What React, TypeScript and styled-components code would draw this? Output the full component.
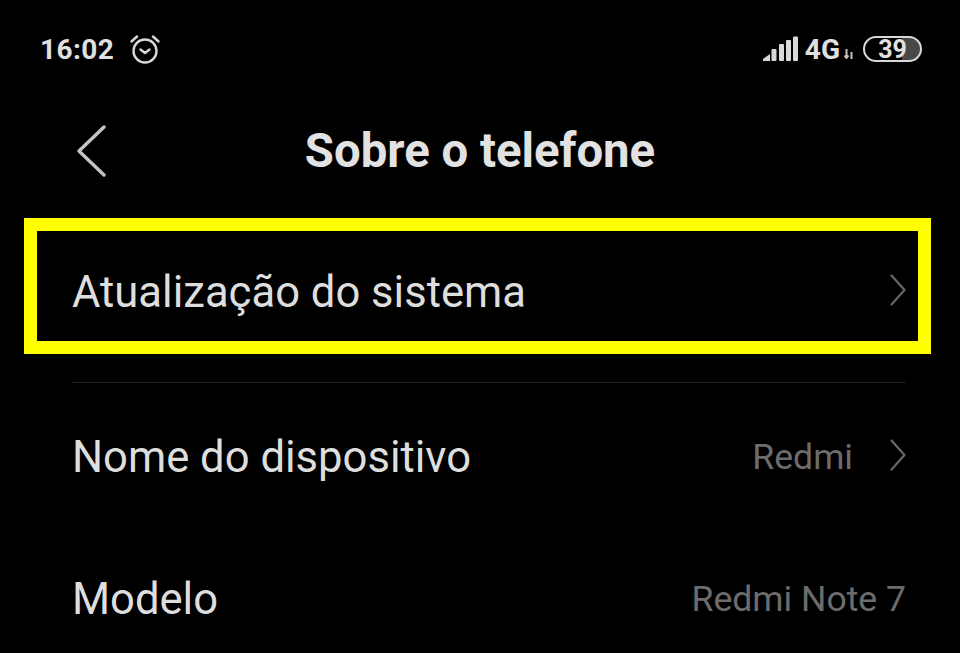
import React from 'react';
import styled, { createGlobalStyle } from 'styled-components';

const Global = createGlobalStyle`
  html, body {
    margin: 0;
    background: #000;
    overflow: hidden;
  }
`;

const Screen = styled.div`
  width: 960px;
  height: 653px;
  overflow: hidden;
  background: #000;
  font-family: Roboto, "Liberation Sans", sans-serif;
  color: #e0e0e0;
`;

const StatusBar = styled.div`
  height: 40px;
  padding: 29px 38px 0 40px;
  display: flex;
  align-items: center;
  justify-content: space-between;
`;

const StatusGroup = styled.div`
  display: flex;
  align-items: center;
`;

const Clock = styled.span`
  font-size: 28px;
  font-weight: 700;
  letter-spacing: 0.4px;
  margin-right: 16px;
`;

const NetworkLabel = styled.span`
  font-size: 28px;
  font-weight: 700;
  margin: 0 4px 0 7px;
`;

const Battery = styled.div`
  width: 59px;
  height: 26px;
  margin-left: 10px;
  box-sizing: border-box;
  border: 2.5px solid #d8d8d8;
  border-radius: 13px;
  overflow: hidden;
  display: flex;
  align-items: center;
  justify-content: center;
  background: linear-gradient(90deg, #000 68%, #484848 68%);
  font-size: 25px;
  font-weight: 700;
`;

const Header = styled.header`
  height: 164px;
  padding: 0 72px;
  position: relative;
  display: flex;
  align-items: center;
  justify-content: center;
`;

const BackIcon = styled.svg`
  position: absolute;
  left: 76px;
  top: 56px;
`;

const Title = styled.h1`
  margin: 0;
  font-size: 47.3px;
  font-weight: 700;
  color: #e2e2e2;
`;

const List = styled.div`
  padding: 0 54px 0 72px;
`;

const Row = styled.div<{ $height: number; $divider?: boolean }>`
  height: ${(p) => p.$height}px;
  box-sizing: border-box;
  display: flex;
  align-items: center;
  justify-content: space-between;
  padding-bottom: ${(p) => (p.$divider ? 30 : 0)}px;
  border-bottom: ${(p) => (p.$divider ? '1px solid #232323' : 'none')};
`;

const Label = styled.span`
  font-size: 43.6px;
  color: #dedede;
`;

const Side = styled.div`
  display: flex;
  align-items: center;
  gap: 37px;
`;

const Value = styled.span`
  font-size: 35.6px;
  color: #6c6c6c;
`;

const ChevronIcon = styled.svg`
  margin-bottom: 5px;
`;

const ArrowsIcon = styled.svg`
  margin-top: 10px;
`;

const Highlight = styled.div`
  position: absolute;
  left: 24px;
  top: 218px;
  width: 907px;
  height: 136px;
  box-sizing: border-box;
  border: 13px solid #ffff00;
`;

const Chevron = () => (
  <ChevronIcon width="16" height="32" viewBox="0 0 16 32" fill="none">
    <path d="M1.5 1.5 L14.5 16 L1.5 30.5" stroke="#666" strokeWidth="2.2" strokeLinecap="round" strokeLinejoin="round" />
  </ChevronIcon>
);

const AlarmIcon = () => (
  <svg width="30" height="30" viewBox="0 0 30 30" fill="none" stroke="#d8d8d8" strokeWidth="2.4" strokeLinecap="round" strokeLinejoin="round">
    <circle cx="15" cy="17" r="11.5" />
    <path d="M10.5 15.5 L15 19 L19.5 15.5" />
    <path d="M1.5 7.5 L7 2.5" />
    <path d="M23 2.5 L28.5 7.5" />
  </svg>
);

const SignalIcon = () => (
  <svg width="35" height="26" viewBox="0 0 35 26" fill="#d8d8d8">
    <path d="M0 25 L0 23 L7 18 V25 Z" />
    <rect x="8.5" y="13" width="5" height="12" rx="1" />
    <rect x="16" y="8" width="5" height="17" rx="1" />
    <rect x="23" y="4" width="5" height="21" rx="1" />
    <rect x="30" y="0.5" width="5" height="24.5" rx="1" />
  </svg>
);

const DataArrows = () => (
  <ArrowsIcon width="9" height="10" viewBox="0 0 9 10" fill="none" stroke="#c4c4c4" strokeWidth="2">
    <path d="M2.5 0 V9 M0.5 6.5 L2.5 9 L4.5 6.5" />
    <path d="M7.5 10 V3" />
  </ArrowsIcon>
);

export default function App() {
  return (
    <Screen>
      <Global />
      <StatusBar>
        <StatusGroup>
          <Clock>16:02</Clock>
          <AlarmIcon />
        </StatusGroup>
        <StatusGroup>
          <SignalIcon />
          <NetworkLabel>4G</NetworkLabel>
          <DataArrows />
          <Battery>39</Battery>
        </StatusGroup>
      </StatusBar>
      <Header>
        <BackIcon width="30" height="52" viewBox="0 0 30 52" fill="none">
          <path d="M28 2 L3 26 L28 50" stroke="#c4c4c4" strokeWidth="3.4" strokeLinecap="round" strokeLinejoin="round" />
        </BackIcon>
        <Title>Sobre o telefone</Title>
      </Header>
      <List>
        <Row $height={150} $divider>
          <Label>Atualização do sistema</Label>
          <Chevron />
        </Row>
        <Row $height={148}>
          <Label>Nome do dispositivo</Label>
          <Side>
            <Value>Redmi</Value>
            <Chevron />
          </Side>
        </Row>
        <Row $height={136}>
          <Label>Modelo</Label>
          <Value>Redmi Note 7</Value>
        </Row>
      </List>
      <Highlight />
    </Screen>
  );
}
